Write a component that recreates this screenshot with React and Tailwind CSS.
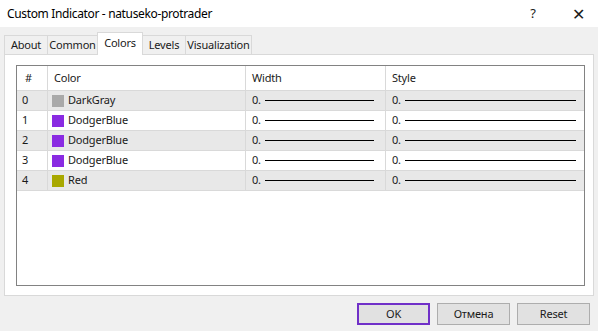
import React from 'react';

const rows = [
  { n: 0, color: '#a9a9a9', name: 'DarkGray' },
  { n: 1, color: '#8a2be2', name: 'DodgerBlue' },
  { n: 2, color: '#8a2be2', name: 'DodgerBlue' },
  { n: 3, color: '#8a2be2', name: 'DodgerBlue' },
  { n: 4, color: '#a8a800', name: 'Red' },
];

const tabs = [
  { t: 'About', w: 'w-[44px]' },
  { t: 'Common', w: 'w-[51px]' },
  { t: 'Colors', w: 'w-[46px]' },
  { t: 'Levels', w: 'w-[44px]' },
  { t: 'Visualization', w: 'w-[67px]' },
];

const LineCell = ({ right }) => (
  <div className={`flex items-center h-full pl-[6px] border-l border-[#d9d9d9] ${right}`}>
    <span>0.</span>
    <span className="ml-[4px] h-px flex-1 bg-black"></span>
  </div>
);

const App = () => {
  return (
    <div className="w-[598px] h-[331px] bg-[#f0f0f0] text-[11px] tracking-[-0.2px] text-[#1a1a1a] flex flex-col overflow-hidden" style={{ fontFamily: '"Segoe UI", "Noto Sans", sans-serif' }}>
      {/* title bar */}
      <div className="h-[27px] bg-white flex items-center pl-[7px] shrink-0">
        <span className="flex-1 text-[12px] tracking-[-0.35px] text-black">Custom Indicator - natuseko-protrader</span>
        <span className="w-[50px] text-center text-[13px]">?</span>
        <span className="w-[40px] text-center text-[16px] font-light">✕</span>
      </div>

      {/* tabs */}
      <div className="flex items-end h-[27px] pl-[4px] relative z-10">
        {tabs.map(({ t, w }) => (
          t === 'Colors' ? (
            <div key={t} className={`${w} h-[23px] bg-white border border-b-0 border-[#d9d9d9] -ml-px flex justify-center items-start pt-[2px] -mb-px`}>
              {t}
            </div>
          ) : (
            <div key={t} className={`${w} h-[19px] bg-[#f0f0f0] border border-b-0 border-[#d9d9d9] -ml-px first:ml-0 flex justify-center items-center`}>
              {t}
            </div>
          )
        ))}
      </div>

      {/* panel */}
      <div className="mx-[4px] w-[590px] h-[242px] bg-white border border-[#d9d9d9] pl-[11px] pt-[10px] pr-[8px] pb-[9px]">
        <div className="h-full border border-[#828282] bg-white">
          <div className="grid grid-cols-[30px_198px_140px_1fr] h-[25px] items-center border-b border-[#d9d9d9]">
            <div className="pl-[8px]">#</div>
            <div className="pl-[6px] h-full flex items-center border-l border-[#d9d9d9]">Color</div>
            <div className="pl-[6px] h-full flex items-center border-l border-[#d9d9d9]">Width</div>
            <div className="pl-[6px] h-full flex items-center border-l border-[#d9d9d9]">Style</div>
          </div>
          {rows.map((r, i) => (
            <div key={r.n} className={`grid grid-cols-[30px_198px_140px_1fr] h-[20px] items-center border-b border-[#d9d9d9] ${i % 2 === 0 ? 'bg-[#e8e8e8]' : 'bg-white'}`}>
              <div className="pl-[5px]">{r.n}</div>
              <div className="flex items-center h-full pl-[4px] border-l border-[#d9d9d9]">
                <span className="w-[12px] h-[12px] mr-[4px]" style={{ backgroundColor: r.color }}></span>
                <span>{r.name}</span>
              </div>
              <LineCell right="pr-[11px]" />
              <LineCell right="pr-[8px]" />
            </div>
          ))}
        </div>
      </div>

      {/* buttons */}
      <div className="flex justify-end gap-[7px] pr-[8px] mt-[7px]">
        <button className="w-[73px] h-[22px] bg-[#e1e1e1] border-2 border-[#7030c8]">OK</button>
        <button className="w-[73px] h-[22px] bg-[#e1e1e1] border border-[#adadad]">Отмена</button>
        <button className="w-[73px] h-[22px] bg-[#e1e1e1] border border-[#adadad]">Reset</button>
      </div>
    </div>
  );
};

export default App;
